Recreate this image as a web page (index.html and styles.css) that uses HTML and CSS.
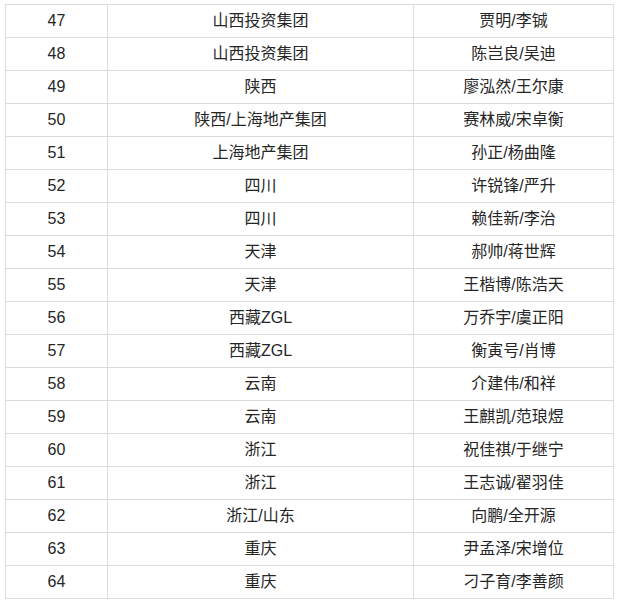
FILE: index.html
```html
<!DOCTYPE html>
<html lang="zh-CN">
<head>
<meta charset="utf-8">
<title>名单</title>
<link rel="stylesheet" href="styles.css">
</head>
<body>
<div class="wrap">
<table class="list">
<colgroup><col class="c1"><col class="c2"><col class="c3"></colgroup>
<tbody>
<tr><td>47</td><td>山西投资集团</td><td>贾明/李铖</td></tr>
<tr><td>48</td><td>山西投资集团</td><td>陈岂良/吴迪</td></tr>
<tr><td>49</td><td>陕西</td><td>廖泓然/王尔康</td></tr>
<tr><td>50</td><td>陕西/上海地产集团</td><td>赛林威/宋卓衡</td></tr>
<tr><td>51</td><td>上海地产集团</td><td>孙正/杨曲隆</td></tr>
<tr><td>52</td><td>四川</td><td>许锐锋/严升</td></tr>
<tr><td>53</td><td>四川</td><td>赖佳新/李治</td></tr>
<tr><td>54</td><td>天津</td><td>郝帅/蒋世辉</td></tr>
<tr><td>55</td><td>天津</td><td>王楷博/陈浩天</td></tr>
<tr><td>56</td><td>西藏ZGL</td><td>万乔宇/虞正阳</td></tr>
<tr><td>57</td><td>西藏ZGL</td><td>衡寅号/肖博</td></tr>
<tr><td>58</td><td>云南</td><td>介建伟/和祥</td></tr>
<tr><td>59</td><td>云南</td><td>王麒凯/范琅煜</td></tr>
<tr><td>60</td><td>浙江</td><td>祝佳祺/于继宁</td></tr>
<tr><td>61</td><td>浙江</td><td>王志诚/翟羽佳</td></tr>
<tr><td>62</td><td>浙江/山东</td><td>向鹏/全开源</td></tr>
<tr><td>63</td><td>重庆</td><td>尹孟泽/宋增位</td></tr>
<tr><td>64</td><td>重庆</td><td>刁子育/李善颜</td></tr>
</tbody>
</table>
</div>
</body>
</html>
```
FILE: styles.css
```css
html, body {
  margin: 0;
  padding: 0;
  background: #ffffff;
}
.wrap {
  padding: 4px 0 0 5px;
}
.list {
  border-collapse: collapse;
  width: 608px;
  table-layout: fixed;
  font-family: "Liberation Sans", "Noto Sans CJK SC", sans-serif;
  font-size: 16px;
  color: #262626;
}
.c1 { width: 102px; }
.c2 { width: 306px; }
.c3 { width: 200px; }
.list td {
  border: 1px solid #dcdcdc;
  height: 32px;
  padding: 0;
  text-align: center;
  vertical-align: middle;
  line-height: 20px;
}
```
